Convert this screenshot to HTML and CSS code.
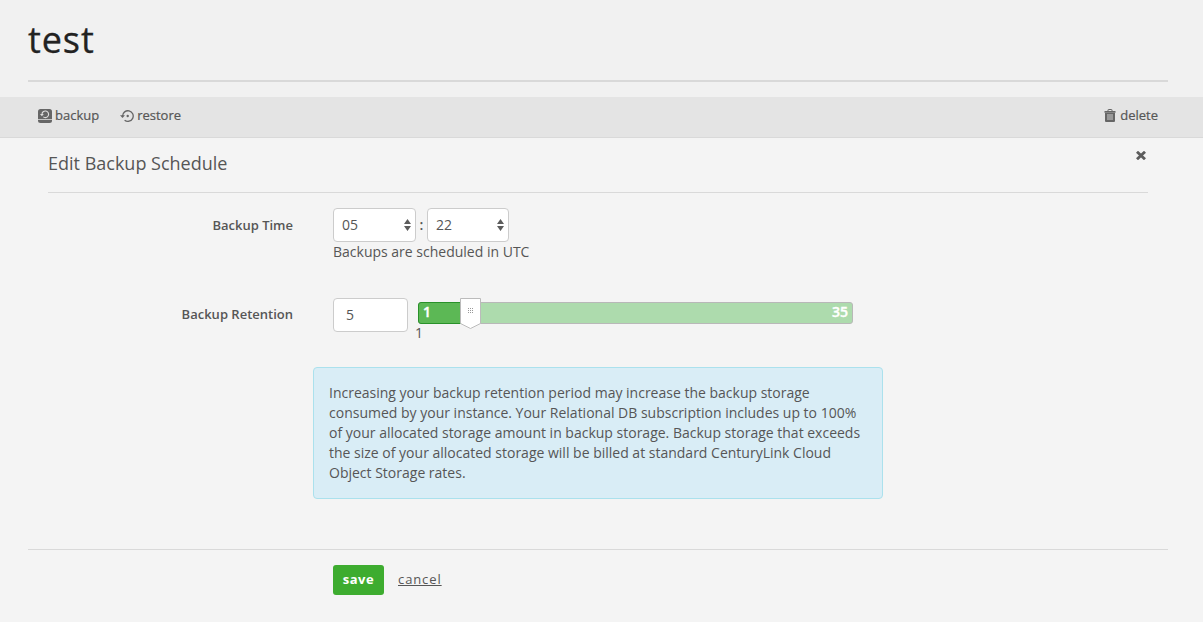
FILE: index.html
```html
<!DOCTYPE html>
<html lang="en">
<head>
<meta charset="utf-8">
<title>test</title>
<link rel="stylesheet" href="styles.css">
</head>
<body>
<header class="page-header"><h1>test</h1></header>
<nav class="toolbar">
  <a class="action"><svg width="14" height="14" viewBox="0 0 14 14"><rect width="14" height="14" rx="2.5" fill="#666"/><path stroke="#c4c4c4" d="M0 10.500h14"/><path fill="none" stroke="#dedede" stroke-width="1.1" d="M4 5.400a3.300 3.300 0 1 1 1.300 2.500"/><path fill="#dedede" d="M2 5h3.800L3.900 7.200z"/></svg><span>backup</span></a>
  <a class="action restore"><svg width="14" height="14" viewBox="0 0 14 14"><path fill="none" stroke="#666" stroke-width="1.3" d="M2.600 7a5.300 5.300 0 1 1 2 4.200"/><path fill="#666" d="M0 6.300h5L2.500 9z"/><circle cx="7.700" cy="7" r="1.200" fill="#666"/></svg><span>restore</span></a>
  <a class="action delete"><svg width="12" height="13" viewBox="0 0 12 13"><path fill="none" stroke="#666" d="M4 2V1q0-.5.5-.5h3q.5 0 .5.5v1"/><path fill="#666" d="M.5 2h11v1.700H.5zM1 4h10v8q0 1-1 1H2q-1 0-1-1z"/><path fill="#999" d="M3 5h6v6H3z"/></svg><span>delete</span></a>
</nav>
<main class="panel">
  <div class="panel-head">
    <h2>Edit Backup Schedule</h2>
    <svg class="close" width="10" height="9" viewBox="0 0 10 9"><path stroke="#5c5c5c" stroke-width="2.9" d="M1 .8l8 7.400M9 .8L1 8.200"/></svg>
  </div>
  <form>
    <div class="row time-row">
      <label>Backup Time</label>
      <div class="field">
        <div class="selects">
          <div class="select hour"><span>05</span><svg width="7" height="12" viewBox="0 0 7 12"><path fill="#5c5c5c" d="M0 5L3.500 0 7 5zM0 7h7l-3.500 5z"/></svg></div>
          <b class="colon">:</b>
          <div class="select minute"><span>22</span><svg width="7" height="12" viewBox="0 0 7 12"><path fill="#5c5c5c" d="M0 5L3.500 0 7 5zM0 7h7l-3.500 5z"/></svg></div>
        </div>
        <p class="hint">Backups are scheduled in UTC</p>
      </div>
    </div>
    <div class="row retention-row">
      <label>Backup Retention</label>
      <div class="number">5</div>
      <div class="slider">
        <div class="track"><span>1</span><span>35</span><div class="fill"></div></div>
        <svg class="handle" width="21" height="31" viewBox="0 0 21 31"><path fill="#fff" stroke="#bbb" d="M.5.5h20v25l-10 5-10-5z"/><path fill="#999" d="M8 10h1v1H8zM10 10h1v1h-1zM12 10h1v1h-1zM8 12h1v1H8zM10 12h1v1h-1zM12 12h1v1h-1zM8 14h1v1H8zM10 14h1v1h-1zM12 14h1v1h-1z"/></svg>
        <div class="tick">1</div>
      </div>
    </div>
    <div class="notice">Increasing your backup retention period may increase the backup storage<br>consumed by your instance. Your Relational DB subscription includes up to 100%<br>of your allocated storage amount in backup storage. Backup storage that exceeds<br>the size of your allocated storage will be billed at standard CenturyLink Cloud<br>Object Storage rates.</div>
    <div class="buttons"><a class="save">save</a><a class="cancel">cancel</a></div>
  </form>
</main>
</body>
</html>
```
FILE: styles.css
```css
* { box-sizing: border-box; }
body { margin: 0; height: 622px; overflow: hidden; background: #f4f4f4; color: #565656; font: 14px/20px "Open Sans", sans-serif; }
h1, h2, p { margin: 0; font-weight: 400; }
.page-header { height: 97px; padding: 0 35px 0 28px; background: #f1f1f1; }
.page-header h1 { height: 82px; padding-top: 15px; border-bottom: 2px solid #d9d9d9; color: #222; font-size: 36px; line-height: 50px; letter-spacing: .9px; -webkit-text-stroke: .3px; }
.toolbar { display: flex; height: 41px; padding: 8px 45px 0 38px; background: #e4e4e4; border-bottom: 1px solid #d9d9d9; font-size: 13px; -webkit-text-stroke: .2px; }
.action { display: flex; height: 20px; align-items: center; gap: 3px; }
.action svg { margin-top: 2px; }
.restore { margin-left: 21px; gap: 3px; }
.delete { margin-left: auto; gap: 4px; }
.delete svg { margin-top: 1px; }
.panel-head { display: flex; justify-content: space-between; height: 55px; margin: 0 55px 0 48px; border-bottom: 1px solid #d9d9d9; }
.panel-head h2 { padding-top: 15px; font-size: 18px; line-height: 20px; }
.close { margin: 13px 2px 0 0; }
.row { display: flex; padding-left: 28px; }
.row label { width: 265px; margin-right: 40px; text-align: right; font-size: 13px; font-weight: 600; line-height: 34px; }
.time-row { margin-top: 15px; }
.selects { display: flex; height: 34px; }
.select { display: flex; align-items: center; justify-content: space-between; border: 1px solid #ccc; border-radius: 4px; background: #fff; padding: 0 4px 0 8px; }
.hour { width: 83px; }
.minute { width: 82px; }
.colon { width: 11px; text-align: center; line-height: 33px; font-weight: 600; }
.hint { line-height: 20px; }
.retention-row { height: 34px; margin-top: 36px; }
.retention-row label { line-height: 32px; }
.number { width: 75px; height: 34px; border: 1px solid #ccc; border-radius: 4px; background: #fff; padding-left: 12px; line-height: 32px; }
.slider { position: relative; width: 435px; margin: 4px 0 0 10px; }
.track { position: relative; display: flex; justify-content: space-between; height: 22px; border: 1px solid #b8b8b8; border-radius: 3px; background: #addbad; padding: 0 4px; color: #fff; font-weight: 600; line-height: 18px; -webkit-text-stroke: .4px; }
.track span { z-index: 1; }
.fill { position: absolute; left: -1px; top: -1px; width: 50px; height: 22px; border: 1px solid #29912a; border-radius: 3px; background: #5cb855; }
.handle { position: absolute; left: 42px; top: -4px; z-index: 2; }
.tick { margin: -1px 0 0 -3px; line-height: 20px; }
.notice { width: 570px; height: 132px; margin: 35px 0 0 313px; padding: 15px; border: 1px solid #abe1ed; border-radius: 4px; background: #d9edf6; }
.buttons { display: flex; margin: 50px 35px 0 28px; padding: 15px 0 0 305px; border-top: 1px solid #d9d9d9; font-size: 13px; letter-spacing: .5px; }
.save { width: 51px; height: 30px; margin-right: 14px; border-radius: 3px; background: #3dac2f; color: #fff; text-align: center; font-weight: 700; line-height: 29px; }
.cancel { line-height: 29px; text-decoration: underline; letter-spacing: .9px; }
```
